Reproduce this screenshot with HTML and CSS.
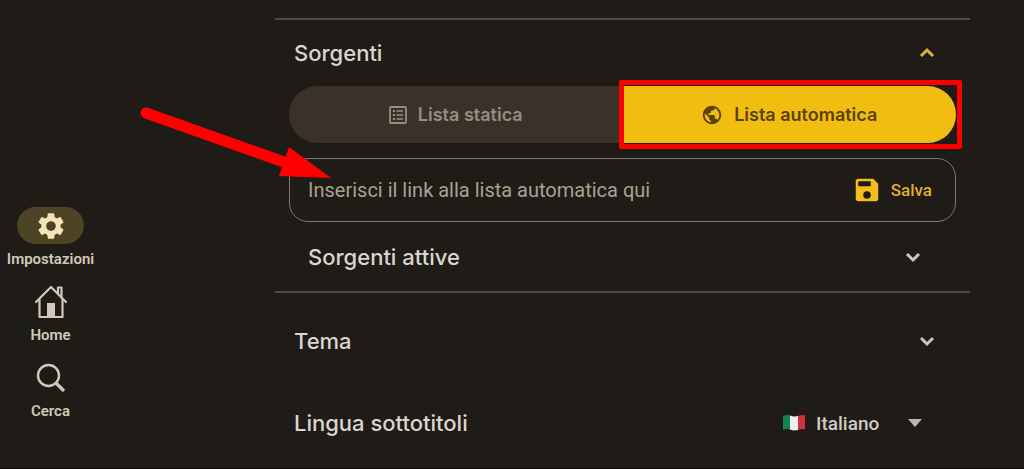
FILE: index.html
```html
<!DOCTYPE html>
<html lang="it">
<head>
<meta charset="utf-8">
<meta name="viewport" content="width=device-width, initial-scale=1">
<title>Impostazioni</title>
<link rel="stylesheet" href="styles.css">
</head>

<body>
<nav class="side_nav">
	<a class="nav_item active" href="#impostazioni">
		<span class="nav_icon"><svg width="32" height="32" viewBox="0 0 24 24"><path fill="currentColor" d="M19.14 12.94c.04-.3.06-.61.06-.94 0-.32-.02-.64-.07-.94l2.03-1.58c.18-.14.23-.41.12-.61l-1.92-3.32c-.12-.22-.37-.29-.59-.22l-2.39.96c-.5-.38-1.03-.7-1.62-.94l-.36-2.54c-.04-.24-.24-.41-.48-.41h-3.84c-.24 0-.43.17-.47.41l-.36 2.54c-.59.24-1.13.57-1.62.94l-2.39-.96c-.22-.08-.47 0-.59.22L2.74 8.87c-.12.21-.08.47.12.61l2.03 1.58c-.05.3-.09.63-.09.94s.02.64.07.94l-2.03 1.58c-.18.14-.23.41-.12.61l1.92 3.32c.12.22.37.29.59.22l2.39-.96c.5.38 1.03.7 1.62.94l.36 2.54c.05.24.24.41.48.41h3.84c.24 0 .44-.17.47-.41l.36-2.54c.59-.24 1.13-.56 1.62-.94l2.39.96c.22.08.47 0 .59-.22l1.92-3.32c.12-.22.07-.47-.12-.61l-2.01-1.58zM12 15.6c-1.98 0-3.6-1.62-3.6-3.6s1.62-3.6 3.6-3.6 3.6 1.62 3.6 3.6-1.62 3.6-3.6 3.6z"/></svg></span>
		<span class="nav_text">Impostazioni</span>
	</a>
	<a class="nav_item" href="#home">
		<span class="nav_icon"><svg width="34" height="34" viewBox="0 0 34 34"><g fill="none" stroke="currentColor" stroke-width="2.2" stroke-linejoin="round" stroke-linecap="round"><path d="M2 17 17 2l15 15"/><path d="M5.5 14.5V32h23V14.5"/><path d="M24 8.500V2.500h3.500V12.500"/></g><path fill="currentColor" d="M13 18h8v14h-8z"/></svg></span>
		<span class="nav_text">Home</span>
	</a>
	<a class="nav_item" href="#cerca">
		<span class="nav_icon"><svg width="30" height="30" viewBox="0 0 30 30"><g fill="none" stroke="currentColor"><circle cx="12.5" cy="12.5" r="10.5" stroke-width="2.4"/><path stroke-width="3.2" d="m19.5 19.5 8.500 8.500"/></g></svg></span>
		<span class="nav_text">Cerca</span>
	</a>
</nav>

<main class="settings">
	<section class="group">
		<button class="row open" type="button" aria-expanded="true">
			<span>Sorgenti</span>
			<svg class="chevron" width="18" height="18" viewBox="0 0 18 18"><path d="m3 12 6-6 6 6"/></svg>
		</button>
		<div class="tabs">
			<button class="tab" type="button">
				<svg width="18" height="18" viewBox="0 0 18 18"><rect x="1" y="1" width="16" height="16" rx="1" fill="none" stroke="currentColor" stroke-width="1.8"/><path fill="currentColor" d="M4 4h2v2H4zM4 8h2v2H4zM4 12h2v2H4zM7.5 4.200H14v1.600H7.500zM7.500 8.200H14v1.600H7.500zM7.500 12.200H14v1.600H7.500z"/></svg>
				Lista statica
			</button>
			<button class="tab selected" type="button">
				<svg width="22" height="22" viewBox="0 0 24 24"><path fill="currentColor" d="M12 2C6.480 2 2 6.480 2 12s4.480 10 10 10 10-4.480 10-10S17.520 2 12 2zm-1 17.930c-3.950-.49-7-3.850-7-7.930 0-.62.08-1.210.21-1.790L9 15v1c0 1.100.9 2 2 2v1.930zm6.900-2.540c-.26-.81-1-1.390-1.900-1.390h-1v-3c0-.55-.45-1-1-1H8v-2h2c.55 0 1-.45 1-1V7h2c1.100 0 2-.9 2-2v-.41c2.930 1.190 5 4.060 5 7.410 0 2.080-.8 3.970-2.100 5.390z"/></svg>
				Lista automatica
				<span class="highlight"></span>
			</button>
		</div>
		<form class="link_box">
			<input class="link_input" type="text" aria-label="Link alla lista automatica" placeholder="Inserisci il link alla lista automatica qui">
			<button class="save" type="button">
				<svg width="30" height="30" viewBox="0 0 24 24"><path fill="currentColor" fill-rule="evenodd" d="M17 3H5a2 2 0 0 0-2 2v14c0 1.100.9 2 2 2h14c1.100 0 2-.9 2-2V7zm-5 16a3 3 0 1 1 0-6 3 3 0 0 1 0 6zm3-10H5V5h10z"/></svg>
				Salva
			</button>
		</form>
		<button class="row sub" type="button" aria-expanded="false">
			<span>Sorgenti attive</span>
			<svg class="chevron" width="18" height="18" viewBox="0 0 18 18"><path d="m3 6 6 6 6-6"/></svg>
		</button>
	</section>

	<button class="row theme" type="button" aria-expanded="false">
		<span>Tema</span>
		<svg class="chevron" width="18" height="18" viewBox="0 0 18 18"><path d="m3 6 6 6 6-6"/></svg>
	</button>

	<div class="row language">
		<label for="lang">Lingua sottotitoli</label>
		<div class="lang_pick">
			<svg class="flag" width="24" height="18" viewBox="0 0 24 18"><path fill="#12844f" d="M1 2q4-2 8 0v14q-4-2-8 0z"/><path fill="#eee" d="M8 1.500q4 1.500 8 .5v14q-4 1-8-.5z"/><path fill="#cf3338" d="M16 2q4-1.500 7-.5v14q-3-1-7 .5z"/></svg>
			<select class="lang_select" id="lang">
				<option>Italiano</option>
			</select>
			<svg class="caret" width="14" height="8" viewBox="0 0 14 8"><path fill="currentColor" d="M0 0h14L7 8z"/></svg>
		</div>
	</div>
</main>

<svg class="arrow" width="200" height="80" viewBox="0 0 200 80"><path stroke="#f00" stroke-width="11" stroke-linecap="round" d="m11 13 138 49"/><path fill="#f00" d="m154 47 42 31-52-2z"/></svg>
</body>
</html>
```

FILE: styles.css
```css
* { box-sizing: border-box; }
body { margin: 0; min-height: 100vh; display: flex; position: relative; background: #1f1b16; color: #dad6cf; font-family: Roboto, "Liberation Sans", sans-serif; border-bottom: 1px solid #0b0908; }
button { margin: 0; padding: 0; border: 0; background: none; color: inherit; font: inherit; cursor: pointer; }
svg { display: block; flex: none; }

/* side navigation */
.side_nav { width: 101px; flex: none; padding-top: 207px; display: flex; flex-direction: column; gap: 15px; }
.nav_item { display: flex; flex-direction: column; align-items: center; gap: 6px; color: #d0c9bb; text-decoration: none; }
.nav_icon { width: 67px; height: 37px; border-radius: 19px; display: flex; align-items: center; justify-content: center; }
.nav_text { font-size: 15px; line-height: 18px; font-weight: 600; }
.active .nav_icon { background: #4d4325; color: #f5e3b8; }

/* settings */
.settings { flex: 1; min-width: 0; margin: 18px 54px 0 174px; }
.group { border: solid #4f4b44; border-width: 2px 0; }
.row { width: 100%; height: 66px; padding: 0 34px 0 19px; display: flex; align-items: center; justify-content: space-between; font: 500 22px Inter, "Open Sans", sans-serif; text-align: left; }
.chevron { fill: none; stroke: #cbc7bf; stroke-width: 3; }
.open .chevron { stroke: #dcb23a; }
.sub { height: 69px; padding: 0 48px 0 33px; }
.theme { height: 96px; }

.tabs { height: 57px; margin: 0 14px 15px; display: flex; border-radius: 29px; background: #3a3229; }
.tab { flex: 1; display: flex; align-items: center; justify-content: center; gap: 11px; position: relative; color: #958e82; font: 600 18px Inter, "Open Sans", sans-serif; }
.selected { border-radius: 0 29px 29px 0; background: #f2bd11; color: #5a4106; }
.highlight { position: absolute; top: -6px; right: -6px; bottom: -6px; left: -4px; border: 5px solid #f00; border-radius: 2px; }

.link_box { height: 64px; margin: 0 14px; padding: 0 23px 0 18px; display: flex; align-items: center; border: 1px solid #7e786c; border-radius: 19px; }
.link_input { flex: 1; min-width: 0; padding: 0; border: 0; outline: 0; background: none; color: #dad6cf; font: 20px Roboto, "Liberation Sans", sans-serif; }
.link_input::placeholder { color: #a8a292; opacity: 1; }
.save { display: flex; align-items: center; gap: 9px; color: #dfb02b; font-size: 17px; font-weight: 500; }
.save svg { color: #f2bd1d; }

.language { height: 68px; padding-right: 48px; }
.lang_pick { display: flex; align-items: center; }
.flag { margin-right: 10px; }
.lang_select { width: 92px; padding: 0; border: 0; appearance: none; background: none; color: #cfcbc4; font: 500 19px Roboto, "Liberation Sans", sans-serif; }
.caret { color: #bbb7ae; }

/* red pointer over the page */
.arrow { position: absolute; left: 135px; top: 100px; pointer-events: none; }
```
